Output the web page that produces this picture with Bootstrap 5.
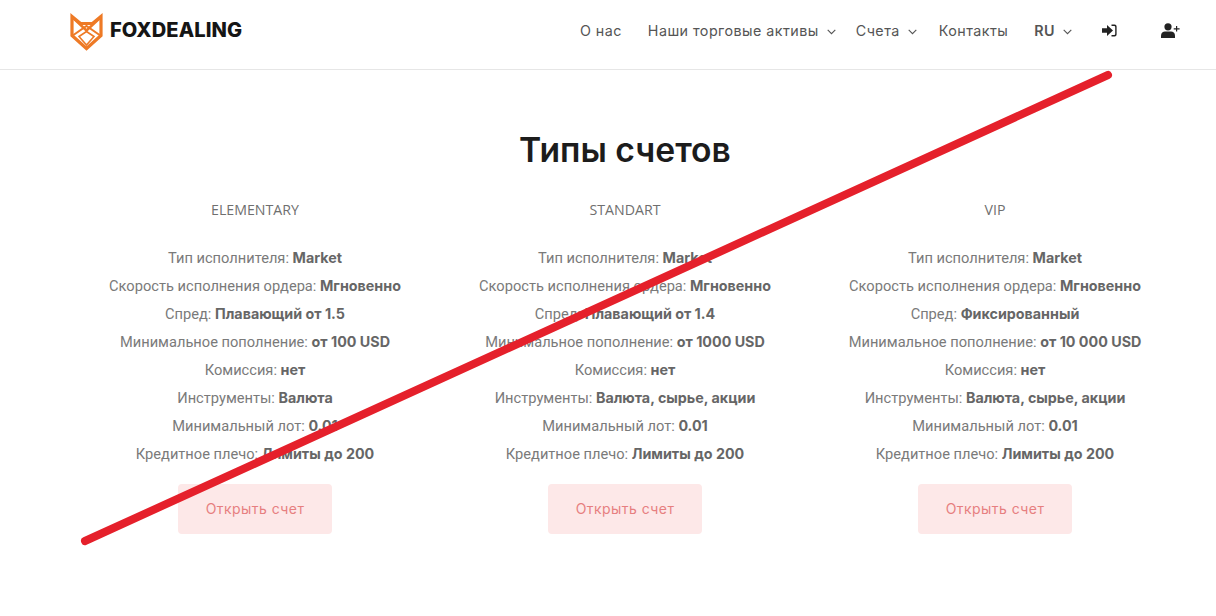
<!DOCTYPE html>
<html lang="ru">
<head>
<meta charset="utf-8">
<title>Foxdealing</title>
<link href="https://cdn.jsdelivr.net/npm/bootstrap@5.3.0/dist/css/bootstrap.min.css" rel="stylesheet">
<style>
html,body{height:100%;overflow:hidden}
body{font-family:Roboto,"Liberation Sans",sans-serif;color:#777;background:#fff;position:relative}
.topbar{height:70px;border-bottom:1px solid #e6e6e6;padding:0}
.wrapx{width:1110px;margin-left:70px}
.brandname{font-family:Inter,sans-serif;font-weight:800;font-size:20.1px;color:#151515;letter-spacing:.1px;margin-left:7px;margin-top:-3px}
.brandlink{margin-top:-5px}
.navitem{font-family:Inter,sans-serif;font-size:14.3px;color:#555;letter-spacing:.45px;white-space:nowrap;text-decoration:none}
.navitem svg{margin-left:8px}
.navmain{margin-top:-8px}
.gap-about{margin-right:26px}
.gap-assets{margin-right:20px}
.gap-acc{margin-right:22px}
.gap-contact{margin-right:26px}
.gap-lang{margin-right:30px}
.gap-login{margin-right:44px}
.pagetitle{font-family:Inter,sans-serif;font-weight:600;font-size:33.7px;color:#1c1c1c;text-align:center;margin:0;padding-top:60px;line-height:40px}
.plan-name{font-size:14.2px;color:#6f6f6f;font-family:"Open Sans",sans-serif;margin:0;line-height:20px;padding-top:30px;padding-bottom:24px}
.plan-row{font-size:14.65px;line-height:28px;color:#7a7a7a;margin:0;white-space:nowrap}
.plan-row b{font-family:Inter,sans-serif;font-weight:700;font-size:14.3px;color:#666}
.openbtn{width:154px;height:50px;background:#fde8e8;color:#e77f80;border:0;border-radius:4px;font-family:Inter,sans-serif;font-size:14px;letter-spacing:.45px;margin-top:16px;display:inline-flex;align-items:center;justify-content:center;text-decoration:none;padding-bottom:2px}
.slash{position:absolute;left:0;top:0;pointer-events:none}
</style>
</head>
<body>
<nav class="navbar topbar">
  <div class="wrapx d-flex align-items-center justify-content-between">
    <a class="d-flex align-items-center text-decoration-none brandlink" href="#">
      <svg width="33" height="38" viewBox="0 0 33 38" fill="none" stroke="#ee7a26" stroke-linejoin="miter">
        <path d="M2 3.5 L10.5 10.5 H22.5 L31 3.5 V22.5 L16.5 35.5 L2 22.5 Z" stroke-width="3.2"/>
        <path d="M2 4 L16.5 17.5 L31 4" stroke-width="2.4"/>
        <path d="M2 23 L16.5 13 L31 23" stroke-width="2"/>
        <path d="M9 23.5 L16.5 18.5 L24 23.5 L16.5 32 Z" stroke-width="1.6"/>
      </svg>
      <span class="brandname">FOXDEALING</span>
    </a>
    <div class="d-flex align-items-center navmain">
      <a class="navitem gap-about" href="#">О нас</a>
      <a class="navitem gap-assets" href="#">Наши торговые активы<svg width="9" height="6" viewBox="0 0 9 6" fill="none" stroke="#555" stroke-width="1.1"><path d="M.7 .8 4.5 4.7 8.3 .8"/></svg></a>
      <a class="navitem gap-acc" href="#">Счета<svg width="9" height="6" viewBox="0 0 9 6" fill="none" stroke="#555" stroke-width="1.1"><path d="M.7 .8 4.5 4.7 8.3 .8"/></svg></a>
      <a class="navitem gap-contact" href="#">Контакты</a>
      <a class="navitem fw-semibold gap-lang" href="#">RU<svg width="9" height="6" viewBox="0 0 9 6" fill="none" stroke="#555" stroke-width="1.1"><path d="M.7 .8 4.5 4.7 8.3 .8"/></svg></a>
      <a href="#" class="d-flex gap-login"><svg width="15" height="13" viewBox="0 0 15 13" fill="#222"><path d="M0 4.3H5V1L11 6.5 5 12V8.7H0Z"/><path d="M9.5 0.6H12.6A2 2 0 0 1 14.6 2.6V10.4A2 2 0 0 1 12.6 12.4H9.5V11H12.2A1 1 0 0 0 13.2 10V3A1 1 0 0 0 12.2 2H9.5Z"/></svg></a>
      <a href="#" class="d-flex"><svg width="19" height="15" viewBox="0 0 19 15" fill="#222"><circle cx="7" cy="3.8" r="3.6"/><path d="M0 15V12.5C0 10 2 8.5 4 8.5H10C12 8.5 14 10 14 12.5V15Z"/><path d="M15 3H16.2V5.2H18.6V6.4H16.2V8.6H15V6.4H12.7V5.2H15Z"/></svg></a>
    </div>
  </div>
</nav>
<main class="wrapx">
  <h1 class="pagetitle">Типы счетов</h1>
  <div class="row g-0 text-center">
    <div class="col-4">
      <p class="plan-name">ELEMENTARY</p>
      <p class="plan-row">Тип исполнителя: <b>Market</b></p>
      <p class="plan-row">Скорость исполнения ордера: <b>Мгновенно</b></p>
      <p class="plan-row">Спред: <b>Плавающий от 1.5</b></p>
      <p class="plan-row">Минимальное пополнение: <b>от 100 USD</b></p>
      <p class="plan-row">Комиссия: <b>нет</b></p>
      <p class="plan-row">Инструменты: <b>Валюта</b></p>
      <p class="plan-row">Минимальный лот: <b>0.01</b></p>
      <p class="plan-row">Кредитное плечо: <b>Лимиты до 200</b></p>
      <a class="openbtn" href="#">Открыть счет</a>
    </div>
    <div class="col-4">
      <p class="plan-name">STANDART</p>
      <p class="plan-row">Тип исполнителя: <b>Market</b></p>
      <p class="plan-row">Скорость исполнения ордера: <b>Мгновенно</b></p>
      <p class="plan-row">Спред: <b>Плавающий от 1.4</b></p>
      <p class="plan-row">Минимальное пополнение: <b>от 1000 USD</b></p>
      <p class="plan-row">Комиссия: <b>нет</b></p>
      <p class="plan-row">Инструменты: <b>Валюта, сырье, акции</b></p>
      <p class="plan-row">Минимальный лот: <b>0.01</b></p>
      <p class="plan-row">Кредитное плечо: <b>Лимиты до 200</b></p>
      <a class="openbtn" href="#">Открыть счет</a>
    </div>
    <div class="col-4">
      <p class="plan-name">VIP</p>
      <p class="plan-row">Тип исполнителя: <b>Market</b></p>
      <p class="plan-row">Скорость исполнения ордера: <b>Мгновенно</b></p>
      <p class="plan-row">Спред: <b>Фиксированный</b></p>
      <p class="plan-row">Минимальное пополнение: <b>от 10 000 USD</b></p>
      <p class="plan-row">Комиссия: <b>нет</b></p>
      <p class="plan-row">Инструменты: <b>Валюта, сырье, акции</b></p>
      <p class="plan-row">Минимальный лот: <b>0.01</b></p>
      <p class="plan-row">Кредитное плечо: <b>Лимиты до 200</b></p>
      <a class="openbtn" href="#">Открыть счет</a>
    </div>
  </div>
</main>
<svg class="slash" width="1216" height="616" viewBox="0 0 1216 616"><path d="M85 541 L1108 75" stroke="#e5202b" stroke-width="8" stroke-linecap="round" fill="none"/></svg>
<script src="https://cdn.jsdelivr.net/npm/bootstrap@5.3.0/dist/js/bootstrap.bundle.min.js"></script>
</body>
</html>
